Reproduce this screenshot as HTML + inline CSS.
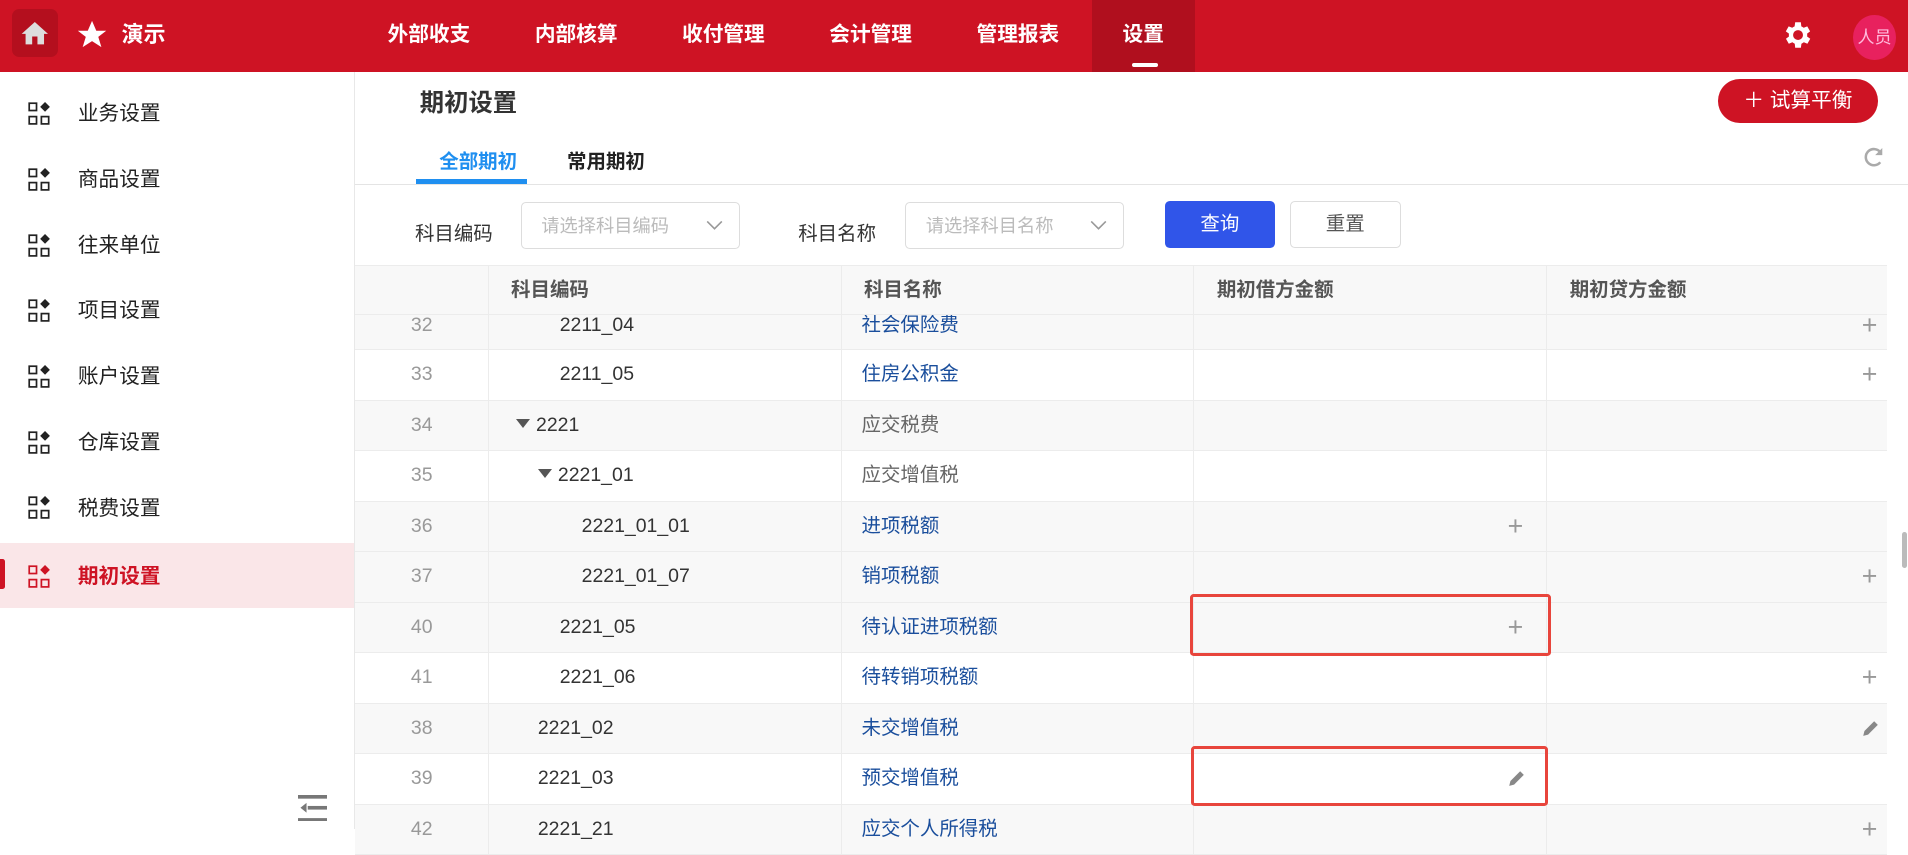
<!DOCTYPE html>
<html><head><meta charset="utf-8"><style>
html{zoom:1.21684}
*{margin:0;padding:0;box-sizing:border-box}
body{width:1568px;height:681px;overflow:hidden;background:#fff;font-family:"Liberation Sans","Noto Sans CJK SC",sans-serif;position:relative;color:#333}
.a{position:absolute}
.hdr{left:0;top:0;width:1568px;height:59px;background:#ce1324}
.nav{top:0;height:59px;line-height:57px;color:#fff;font-weight:bold;font-size:17px;width:121px;text-align:center}
.side{left:0;top:59px;width:292px;height:622px;border-right:1px solid #e8e8e8}
.si{left:0;width:291px;height:54px;line-height:56px;font-size:17px;color:#222}
.si .t{position:absolute;left:64px}
.ic{position:absolute;left:23px;top:18px;width:20px;height:20px}
.row{left:292px;width:1259px;height:41.5px;border-bottom:1px solid #ececec;font-size:16px;line-height:41px}
.g{background:#f8f8f8}
.c{position:absolute;top:0;height:100%}
.idx{left:0;width:110px;text-align:center;color:#999;border-right:1px solid #ececec}
.cd{left:110px;width:290px;border-right:1px solid #ececec}
.nm{left:400px;width:289px;border-right:1px solid #ececec;padding-left:16px;color:#1a4e9c}
.nm.p{color:#666}
.db{left:689px;width:290px;border-right:1px solid #ececec}
.pl{position:absolute;font-size:22px;color:#999;font-weight:300;line-height:41px}
.tri{display:inline-block;width:0;height:0;border-left:6px solid transparent;border-right:6px solid transparent;border-top:8px solid #555;margin-right:5px;vertical-align:middle;position:relative;top:-2px}
</style></head><body>
<div class="a hdr"></div>
<div class="a" style="left:10px;top:7px;width:38px;height:40px;background:#b40f1e;border-radius:6px"></div>
<svg class="a" style="left:16px;top:15px" width="26" height="26" viewBox="0 0 24 24"><path d="M10 20v-6h4v6h5v-8h3L12 3 2 12h3v8z" fill="#ddd"/></svg>
<svg class="a" style="left:62px;top:15px" width="28" height="28" viewBox="0 0 24 24"><path d="M12 2l3 7h7l-5.6 4.3 2.2 7.2L12 16.3 5.4 20.5l2.2-7.2L2 9h7z" fill="#fff"/></svg>
<div class="a" style="left:100px;top:0;line-height:57px;color:#fff;font-weight:bold;font-size:18px">演示</div>
<div class="a nav" style="left:292px">外部收支</div>
<div class="a nav" style="left:413px">内部核算</div>
<div class="a nav" style="left:534px">收付管理</div>
<div class="a nav" style="left:655px">会计管理</div>
<div class="a nav" style="left:776px">管理报表</div>
<div class="a" style="left:897px;top:0;width:85px;height:59px;background:#b00f1e"></div>
<div class="a nav" style="left:897px;width:85px">设置</div>
<div class="a" style="left:930px;top:52px;width:22px;height:3px;background:#fff;border-radius:2px"></div>
<svg class="a" style="left:1464px;top:15px" width="28" height="28" viewBox="0 0 24 24"><path fill="#fff" d="M19.4 13a7.5 7.5 0 000-2l2.1-1.6-2-3.5-2.5 1a7 7 0 00-1.7-1L15 3h-4l-.4 2.9a7 7 0 00-1.7 1l-2.5-1-2 3.5L6.6 11a7.5 7.5 0 000 2l-2.1 1.6 2 3.5 2.5-1a7 7 0 001.7 1L11 21h4l.4-2.9a7 7 0 001.7-1l2.5 1 2-3.5zM13 15.5a3.5 3.5 0 110-7 3.5 3.5 0 010 7z" transform="translate(-1 0)"/></svg>
<div class="a" style="left:1523px;top:12px;width:35px;height:37px;border-radius:50%;background:#e8215e;color:#fbd;font-size:14px;line-height:37px;text-align:center">人员</div>

<div class="a side"></div>
<div class="a" style="left:0;top:446px;width:291px;height:54px;background:#fae6e8"></div>
<div class="a" style="left:0;top:459px;width:4px;height:25px;background:#ce1324;border-radius:0 2px 2px 0"></div>

<div class="a si" style="top:66px"><svg class="ic" viewBox="0 0 20 20"><g fill="none" stroke="#222" stroke-width="1.4"><rect x="1" y="1" width="6" height="6"/><rect x="1" y="12" width="6" height="6"/><rect x="11" y="12" width="6" height="6"/></g><path d="M14 0l4 4-4 4-4-4z" fill="#222"/></svg><span class="t">业务设置</span></div>
<div class="a si" style="top:120px"><svg class="ic" viewBox="0 0 20 20"><g fill="none" stroke="#222" stroke-width="1.4"><rect x="1" y="1" width="6" height="6"/><rect x="1" y="12" width="6" height="6"/><rect x="11" y="12" width="6" height="6"/></g><path d="M14 0l4 4-4 4-4-4z" fill="#222"/></svg><span class="t">商品设置</span></div>
<div class="a si" style="top:174px"><svg class="ic" viewBox="0 0 20 20"><g fill="none" stroke="#222" stroke-width="1.4"><rect x="1" y="1" width="6" height="6"/><rect x="1" y="12" width="6" height="6"/><rect x="11" y="12" width="6" height="6"/></g><path d="M14 0l4 4-4 4-4-4z" fill="#222"/></svg><span class="t">往来单位</span></div>
<div class="a si" style="top:228px"><svg class="ic" viewBox="0 0 20 20"><g fill="none" stroke="#222" stroke-width="1.4"><rect x="1" y="1" width="6" height="6"/><rect x="1" y="12" width="6" height="6"/><rect x="11" y="12" width="6" height="6"/></g><path d="M14 0l4 4-4 4-4-4z" fill="#222"/></svg><span class="t">项目设置</span></div>
<div class="a si" style="top:282px"><svg class="ic" viewBox="0 0 20 20"><g fill="none" stroke="#222" stroke-width="1.4"><rect x="1" y="1" width="6" height="6"/><rect x="1" y="12" width="6" height="6"/><rect x="11" y="12" width="6" height="6"/></g><path d="M14 0l4 4-4 4-4-4z" fill="#222"/></svg><span class="t">账户设置</span></div>
<div class="a si" style="top:336px"><svg class="ic" viewBox="0 0 20 20"><g fill="none" stroke="#222" stroke-width="1.4"><rect x="1" y="1" width="6" height="6"/><rect x="1" y="12" width="6" height="6"/><rect x="11" y="12" width="6" height="6"/></g><path d="M14 0l4 4-4 4-4-4z" fill="#222"/></svg><span class="t">仓库设置</span></div>
<div class="a si" style="top:390px"><svg class="ic" viewBox="0 0 20 20"><g fill="none" stroke="#222" stroke-width="1.4"><rect x="1" y="1" width="6" height="6"/><rect x="1" y="12" width="6" height="6"/><rect x="11" y="12" width="6" height="6"/></g><path d="M14 0l4 4-4 4-4-4z" fill="#222"/></svg><span class="t">税费设置</span></div>
<div class="a si" style="top:446px;color:#ce1324;font-weight:bold"><svg class="ic" viewBox="0 0 20 20"><g fill="none" stroke="#ce1324" stroke-width="1.4"><rect x="1" y="1" width="6" height="6"/><rect x="1" y="12" width="6" height="6"/><rect x="11" y="12" width="6" height="6"/></g><path d="M14 0l4 4-4 4-4-4z" fill="#ce1324"/></svg><span class="t">期初设置</span></div>
<svg class="a" style="left:245px;top:653px" width="24" height="22" viewBox="0 0 24 22"><g fill="#777"><rect x="0" y="0" width="24" height="3"/><rect x="8" y="9" width="16" height="3"/><rect x="0" y="19" width="24" height="3"/><path d="M2 10.5l5-4v8z"/></g></svg>

<div class="a" style="left:345px;top:69px;font-size:20px;font-weight:bold;color:#333">期初设置</div>
<div class="a" style="left:361px;top:119px;font-size:16px;font-weight:bold;color:#1f8ff0">全部期初</div>
<div class="a" style="left:466px;top:119px;font-size:16px;font-weight:bold;color:#222">常用期初</div>
<div class="a" style="left:292px;top:151px;width:1276px;height:1px;background:#e4e4e4"></div>
<div class="a" style="left:342px;top:147px;width:91px;height:4px;background:#1f8ff0"></div>
<div class="a" style="left:1412px;top:65px;width:131px;height:36px;border-radius:18px;background:#ce1324;color:#fff;font-size:17px;line-height:36px;text-align:center">＋ 试算平衡</div>
<svg class="a" style="left:1530px;top:119px" width="20" height="20" viewBox="0 0 24 24"><path d="M18 7a8 8 0 100 10" fill="none" stroke="#aaa" stroke-width="2.5"/><path d="M20 3v7h-7z" fill="#aaa"/></svg>

<div class="a" style="left:341px;top:178px;font-size:16px;color:#333">科目编码</div>
<div class="a" style="left:428px;top:166px;width:180px;height:39px;border:1px solid #ddd;border-radius:4px;font-size:15px;color:#bbb;line-height:37px;padding-left:16px">请选择科目编码</div>
<svg class="a" style="left:580px;top:180px" width="14" height="10" viewBox="0 0 14 10"><path d="M1 2l6 6 6-6" fill="none" stroke="#999" stroke-width="1.3"/></svg>
<div class="a" style="left:656px;top:178px;font-size:16px;color:#333">科目名称</div>
<div class="a" style="left:744px;top:166px;width:180px;height:39px;border:1px solid #ddd;border-radius:4px;font-size:15px;color:#bbb;line-height:37px;padding-left:16px">请选择科目名称</div>
<svg class="a" style="left:896px;top:180px" width="14" height="10" viewBox="0 0 14 10"><path d="M1 2l6 6 6-6" fill="none" stroke="#999" stroke-width="1.3"/></svg>
<div class="a" style="left:957px;top:165px;width:91px;height:39px;border-radius:4px;background:#3055e9;color:#fff;font-size:16px;line-height:39px;text-align:center">查询</div>
<div class="a" style="left:1060px;top:165px;width:91px;height:39px;border-radius:4px;border:1px solid #ddd;color:#555;font-size:16px;line-height:37px;text-align:center">重置</div>

<div class="a row g" style="top:246px;height:42px"><div class="c idx" style="line-height:43px">32</div><div class="c cd" style="padding-left:58px;line-height:43px">2211_04</div><div class="c nm" style="line-height:43px">社会保险费</div><div class="c db"></div><span class="pl" style="left:1238px;top:1px">+</span></div>
<div class="a row" style="top:288px"><div class="c idx">33</div><div class="c cd" style="padding-left:58px">2211_05</div><div class="c nm">住房公积金</div><div class="c db"></div><span class="pl" style="left:1238px">+</span></div>
<div class="a row g" style="top:329.5px"><div class="c idx">34</div><div class="c cd" style="padding-left:22px"><span class="tri"></span>2221</div><div class="c nm p">应交税费</div><div class="c db"></div></div>
<div class="a row" style="top:371px"><div class="c idx">35</div><div class="c cd" style="padding-left:40px"><span class="tri"></span>2221_01</div><div class="c nm p">应交增值税</div><div class="c db"></div></div>
<div class="a row g" style="top:412.5px"><div class="c idx">36</div><div class="c cd" style="padding-left:76px">2221_01_01</div><div class="c nm">进项税额</div><div class="c db"></div><span class="pl" style="left:947px">+</span></div>
<div class="a row g" style="top:454px"><div class="c idx">37</div><div class="c cd" style="padding-left:76px">2221_01_07</div><div class="c nm">销项税额</div><div class="c db"></div><span class="pl" style="left:1238px">+</span></div>
<div class="a row g" style="top:495.5px"><div class="c idx">40</div><div class="c cd" style="padding-left:58px">2221_05</div><div class="c nm">待认证进项税额</div><div class="c db"></div><span class="pl" style="left:947px">+</span></div>
<div class="a row" style="top:537px"><div class="c idx">41</div><div class="c cd" style="padding-left:58px">2221_06</div><div class="c nm">待转销项税额</div><div class="c db"></div><span class="pl" style="left:1238px">+</span></div>
<div class="a row g" style="top:578.5px"><div class="c idx">38</div><div class="c cd" style="padding-left:40px">2221_02</div><div class="c nm">未交增值税</div><div class="c db"></div><svg class="a" style="left:1238px;top:13px" width="14" height="14" viewBox="0 0 14 14"><path d="M1 13l1-4 8-8 3 3-8 8z" fill="#888"/></svg></div>
<div class="a row" style="top:620px"><div class="c idx">39</div><div class="c cd" style="padding-left:40px">2221_03</div><div class="c nm">预交增值税</div><div class="c db"></div><svg class="a" style="left:947px;top:13px" width="14" height="14" viewBox="0 0 14 14"><path d="M1 13l1-4 8-8 3 3-8 8z" fill="#888"/></svg></div>
<div class="a row g" style="top:661.5px"><div class="c idx">42</div><div class="c cd" style="padding-left:40px">2221_21</div><div class="c nm">应交个人所得税</div><div class="c db"></div><span class="pl" style="left:1238px">+</span></div>

<div class="a" style="left:292px;top:218px;width:1259px;height:41px;background:#f8f8f8;border-top:1px solid #ececec;border-bottom:1px solid #ececec;font-size:16px;font-weight:bold;color:#555;line-height:40px">
<div class="c" style="left:0;width:110px;border-right:1px solid #ececec"></div>
<div class="c" style="left:110px;width:290px;border-right:1px solid #ececec;padding-left:18px">科目编码</div>
<div class="c" style="left:400px;width:289px;border-right:1px solid #ececec;padding-left:18px">科目名称</div>
<div class="c" style="left:689px;width:290px;border-right:1px solid #ececec;padding-left:19px">期初借方金额</div>
<div class="c" style="left:979px;width:280px;padding-left:19px">期初贷方金额</div>
</div>
<div class="a" style="left:1551px;top:218px;width:17px;height:463px;background:#fff"></div>
<div class="a" style="left:1563px;top:437px;width:4px;height:30px;background:#bbb;border-radius:2px"></div>

<div class="a" style="left:978px;top:488px;width:297px;height:51px;border:2.5px solid #e8453c;border-radius:3px"></div>
<div class="a" style="left:979px;top:613px;width:293px;height:49px;border:2.5px solid #e8453c;border-radius:3px"></div>
</body></html>
